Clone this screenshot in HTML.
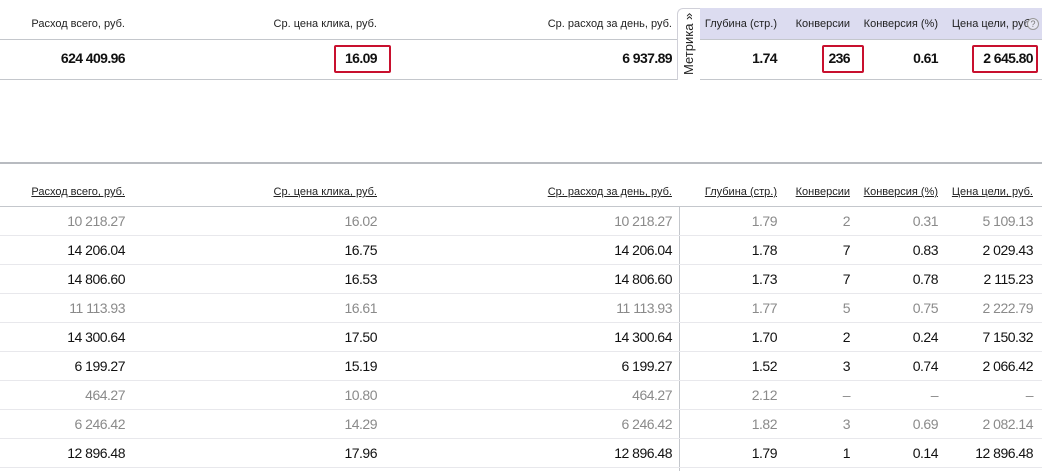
<!DOCTYPE html>
<html><head><meta charset="utf-8"><style>
*{margin:0;padding:0;box-sizing:border-box}
body{width:1042px;height:471px;background:#fff;position:relative;overflow:hidden;font-family:"Liberation Sans","DejaVu Sans",sans-serif;color:#111}
.a{position:absolute;white-space:nowrap;text-align:right}
.h{font-size:11px;color:#222;top:17px;line-height:14px}
.h2{font-size:11px;color:#222;top:185px;line-height:14px;text-decoration:underline}
.t{font-size:14px;font-weight:bold;top:48px;line-height:20px;letter-spacing:-0.6px}
.l{position:absolute;left:0;width:1042px;height:1px}
.r{position:absolute;left:0;width:1042px;height:29px;border-bottom:1px solid #e8e8ec;font-size:14px;line-height:29px;letter-spacing:-0.5px}
.r span{position:absolute;white-space:nowrap}
.g{color:#8a8a8a}
.box{position:absolute;border:2px solid #c8102e;border-radius:2px}
</style></head><body>
<div style="position:absolute;left:700px;top:8px;width:342px;height:32px;background:#dcdcf0"></div>
<div class="l" style="top:39px;background:#c4c7cc"></div>
<div class="l" style="top:79px;background:#c4c7cc"></div>
<div class="l" style="top:162px;height:2px;background:#b8bbc0"></div>
<div class="l" style="top:206px;background:#c4c7cc"></div>
<div style="position:absolute;left:677px;top:8px;width:23px;height:72px;background:#fff;border:1px solid #d0d0d8;border-right:none;border-radius:6px 0 0 0"></div>
<div style="position:absolute;left:678px;top:78px;width:22px;height:3px;background:#fff"></div>
<div style="position:absolute;left:680px;top:75px;transform:rotate(-90deg);transform-origin:0 0;font-size:13px;line-height:18px;color:#222;white-space:nowrap">Метрика »</div>

<div class="a h" style="right:917px">Расход всего, руб.</div>
<div class="a h" style="right:665px">Ср. цена клика, руб.</div>
<div class="a h" style="right:370px">Ср. расход за день, руб.</div>
<div class="a h" style="right:265px">Глубина (стр.)</div>
<div class="a h" style="right:192px">Конверсии</div>
<div class="a h" style="right:104px">Конверсия (%)</div>
<div class="a h" style="right:9px">Цена цели, руб.</div>
<div style="position:absolute;left:1027px;top:18px;width:12px;height:12px;border:1px solid #999;border-radius:50%;font-size:9px;line-height:10px;text-align:center;color:#777;background:#e8e8f4">?</div>

<div class="a t" style="right:917px">624 409.96</div>
<div class="a t" style="right:665px">16.09</div>
<div class="a t" style="right:370px">6 937.89</div>
<div class="a t" style="right:265px">1.74</div>
<div class="a t" style="right:192px">236</div>
<div class="a t" style="right:104px">0.61</div>
<div class="a t" style="right:9px">2 645.80</div>
<div class="box" style="left:334px;top:45px;width:57px;height:28px"></div>
<div class="box" style="left:822px;top:45px;width:42px;height:28px"></div>
<div class="box" style="left:972px;top:45px;width:66px;height:28px"></div>

<div class="a h2" style="right:917px">Расход всего, руб.</div>
<div class="a h2" style="right:665px">Ср. цена клика, руб.</div>
<div class="a h2" style="right:370px">Ср. расход за день, руб.</div>
<div class="a h2" style="right:265px">Глубина (стр.)</div>
<div class="a h2" style="right:192px">Конверсии</div>
<div class="a h2" style="right:104px">Конверсия (%)</div>
<div class="a h2" style="right:9px">Цена цели, руб.</div>

<div style="position:absolute;left:679px;top:207px;width:1px;height:264px;background:#c4c7cc"></div>

<div class="r g" style="top:207px"><span style="right:917px">10 218.27</span><span style="right:665px">16.02</span><span style="right:370px">10 218.27</span><span style="right:265px">1.79</span><span style="right:192px">2</span><span style="right:104px">0.31</span><span style="right:9px">5 109.13</span></div>
<div class="r" style="top:236px"><span style="right:917px">14 206.04</span><span style="right:665px">16.75</span><span style="right:370px">14 206.04</span><span style="right:265px">1.78</span><span style="right:192px">7</span><span style="right:104px">0.83</span><span style="right:9px">2 029.43</span></div>
<div class="r" style="top:265px"><span style="right:917px">14 806.60</span><span style="right:665px">16.53</span><span style="right:370px">14 806.60</span><span style="right:265px">1.73</span><span style="right:192px">7</span><span style="right:104px">0.78</span><span style="right:9px">2 115.23</span></div>
<div class="r g" style="top:294px"><span style="right:917px">11 113.93</span><span style="right:665px">16.61</span><span style="right:370px">11 113.93</span><span style="right:265px">1.77</span><span style="right:192px">5</span><span style="right:104px">0.75</span><span style="right:9px">2 222.79</span></div>
<div class="r" style="top:323px"><span style="right:917px">14 300.64</span><span style="right:665px">17.50</span><span style="right:370px">14 300.64</span><span style="right:265px">1.70</span><span style="right:192px">2</span><span style="right:104px">0.24</span><span style="right:9px">7 150.32</span></div>
<div class="r" style="top:352px"><span style="right:917px">6 199.27</span><span style="right:665px">15.19</span><span style="right:370px">6 199.27</span><span style="right:265px">1.52</span><span style="right:192px">3</span><span style="right:104px">0.74</span><span style="right:9px">2 066.42</span></div>
<div class="r g" style="top:381px"><span style="right:917px">464.27</span><span style="right:665px">10.80</span><span style="right:370px">464.27</span><span style="right:265px">2.12</span><span style="right:192px">–</span><span style="right:104px">–</span><span style="right:9px">–</span></div>
<div class="r g" style="top:410px"><span style="right:917px">6 246.42</span><span style="right:665px">14.29</span><span style="right:370px">6 246.42</span><span style="right:265px">1.82</span><span style="right:192px">3</span><span style="right:104px">0.69</span><span style="right:9px">2 082.14</span></div>
<div class="r" style="top:439px"><span style="right:917px">12 896.48</span><span style="right:665px">17.96</span><span style="right:370px">12 896.48</span><span style="right:265px">1.79</span><span style="right:192px">1</span><span style="right:104px">0.14</span><span style="right:9px">12 896.48</span></div>
</body></html>
